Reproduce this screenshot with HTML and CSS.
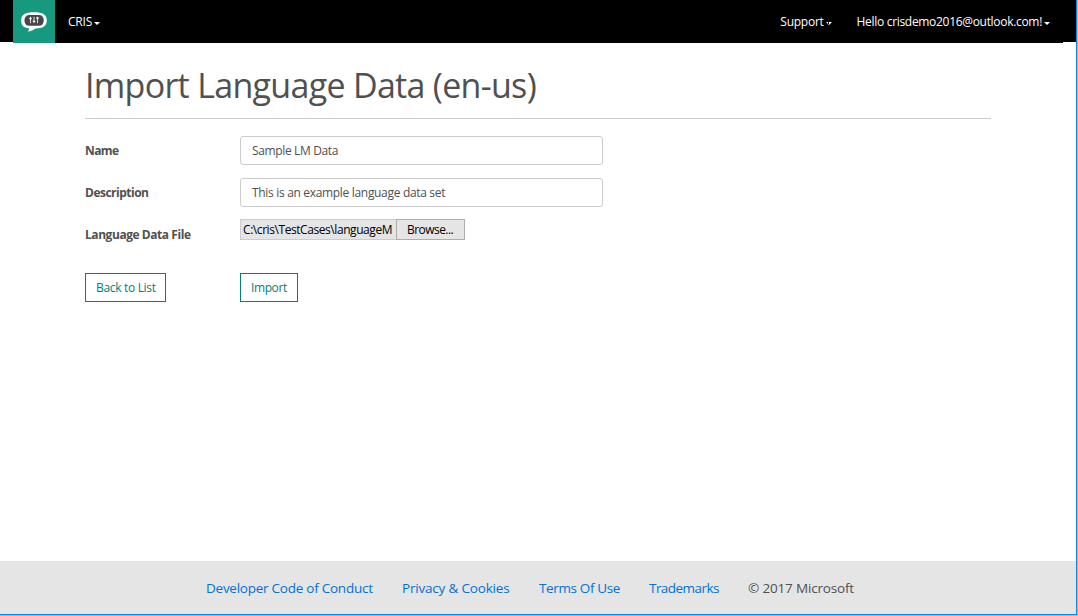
FILE: index.html
```html
<!DOCTYPE html>
<html lang="en">
<head>
<meta charset="utf-8">
<title>Import Language Data</title>
<link rel="stylesheet" href="styles.css">
</head>
<body>
<div class="window">
  <header class="topbar">
    <nav class="nav">
      <a class="logo" href="#">
        <svg width="42" height="43" viewBox="0 0 42 43">
          <path d="M21 12.3C29.500 12.300 33.800 14.500 33.800 20.300C33.800 26.500 30 28.300 22.500 28.400C20.500 30 18 31.200 14.500 31.600C15.700 30.500 16.200 29.500 16 28.200C10.500 27.800 8.200 25.800 8.200 20.300C8.200 14.500 12.500 12.300 21 12.300Z" fill="#fff"/>
          <rect x="11.500" y="15" width="19.200" height="10.800" rx="4.800" fill="#464646"/>
          <path d="M17.500 16.800v6.400M21 16.800v6.400M24.500 16.800v6.400" stroke="#ddd" stroke-width="1"/>
          <path d="M16.300 18.500h2.400M19.800 21.300h2.400M23.300 18h2.400" stroke="#fff" stroke-width="1.300"/>
        </svg>
      </a>
      <a class="nav-item" href="#"><span class="t-cris">CRIS</span><i class="caret"></i></a>
      <a class="nav-item support" href="#"><span class="t-support">Support</span><i class="caret split"></i></a>
      <a class="nav-item user" href="#"><span class="t-user">Hello crisdemo2016@outlook.com!</span><i class="caret"></i></a>
    </nav>
  </header>
  <main class="content">
    <h1 class="title"><span class="t-title">Import Language Data (en-us)</span></h1>
    <form class="form">
      <label class="label t-name">Name</label>
      <div class="field t-sample">Sample LM Data</div>
      <label class="label t-desc">Description</label>
      <div class="field t-example">This is an example language data set</div>
      <label class="label t-file">Language Data File</label>
      <div class="file">
        <div class="path"><span class="t-path">C:\cris\TestCases\languageM</span></div>
        <div class="browse"><span class="t-browse">Browse...</span></div>
      </div>
      <div class="cell"><a class="btn back" href="#"><span class="t-back">Back to List</span></a></div>
      <div class="cell"><a class="btn import" href="#"><span class="t-import">Import</span></a></div>
    </form>
  </main>
  <footer class="footer">
    <a class="link code" href="#"><span class="t-code">Developer Code of Conduct</span></a>
    <a class="link privacy" href="#"><span class="t-privacy">Privacy &amp; Cookies</span></a>
    <a class="link terms" href="#"><span class="t-terms">Terms Of Use</span></a>
    <a class="link marks" href="#"><span class="t-marks">Trademarks</span></a>
    <span class="t-copy">© 2017 Microsoft</span>
  </footer>
</div>
</body>
</html>
```
FILE: styles.css
```css
* { box-sizing: border-box; }
body {
  margin: 0;
  width: 1078px;
  height: 616px;
  overflow: hidden;
  background: #a9b9c6;
  font: 12px/20px "Open Sans", "Noto Sans", sans-serif;
  color: #505050;
}
a { text-decoration: none; }
span, .label, .field { white-space: nowrap; }
.window {
  display: flex;
  flex-direction: column;
  width: 1077px;
  height: 615px;
  background: #fff;
  border-right: 1px solid #1683d8;
  border-bottom: 1px solid #1683d8;
}
.topbar { height: 42px; flex: none; background: #000; padding: 0 13px; }
.nav { display: flex; height: 43px; background: #000; }
.logo { width: 42px; height: 43px; background: #16997f; margin-right: 13px; }
.logo svg { display: block; }
.nav-item { display: flex; align-items: center; color: #fff; height: 43px; }
.support { margin-left: auto; margin-right: 25px; }
.user { margin-right: 13px; }
.caret {
  margin: 4px 0 0 2px;
  border: 3px solid transparent;
  border-top-color: #fff;
  border-bottom: 0;
}
.split { position: relative; }
.split::after {
  content: "";
  position: absolute;
  left: -1px;
  top: -3px;
  width: 1px;
  height: 2px;
  background: #000;
}
.t-cris { letter-spacing: -0.2px; }
.t-support { letter-spacing: -0.25px; }
.t-user { letter-spacing: -0.31px; }
.content { flex: 1; padding: 23px 85px 0; }
.title {
  width: 906px;
  height: 54px;
  margin: 0 0 17px;
  border-bottom: 1px solid #ccc;
  font-size: 34px;
  line-height: 40px;
  font-weight: 400;
}
.t-title { letter-spacing: -0.7px; }
.form {
  display: grid;
  grid-template-columns: 155px 363px;
  grid-template-rows: 29px 29px 29px 29px;
  row-gap: 13px;
}
.label { font-weight: 700; line-height: 29px; }
.t-name { letter-spacing: -0.6px; }
.t-desc { letter-spacing: -0.5px; }
.t-file { letter-spacing: -0.44px; }
.field {
  height: 29px;
  line-height: 27px;
  padding-left: 11px;
  border: 1px solid #ccc;
  border-radius: 3px;
}
.t-sample { letter-spacing: -0.36px; }
.t-example { letter-spacing: -0.32px; }
.file { display: flex; height: 21px; margin-top: -1px; color: #000; line-height: 20px; }
.path {
  width: 156px;
  padding-left: 2px;
  background: #e5e5e5;
  border: 1px solid #ccc;
  border-right: 0;
}
.t-path { letter-spacing: -0.43px; }
.browse { width: 69px; padding-left: 10px; background: #e5e5e5; border: 1px solid #adadad; }
.t-browse { letter-spacing: -0.55px; }
.cell { padding-top: 11px; }
.btn {
  display: block;
  height: 29px;
  line-height: 27px;
  padding-left: 10px;
  border: 1px solid #008272;
  color: #008272;
}
.back { width: 81px; }
.import { width: 58px; }
.t-back { letter-spacing: -0.32px; }
.t-import { letter-spacing: -0.4px; }
.footer {
  display: flex;
  flex: none;
  height: 53px;
  padding-left: 206px;
  background: #e5e5e5;
  font-size: 13.500px;
  line-height: 54px;
}
.link { color: #0072d6; }
.code { width: 196px; }
.privacy { width: 137px; }
.terms { width: 110px; }
.marks { width: 99px; }
.t-code { letter-spacing: -0.25px; }
.t-privacy { letter-spacing: -0.19px; }
.t-terms { letter-spacing: -0.36px; }
.t-marks { letter-spacing: -0.55px; }
.t-copy { letter-spacing: -0.17px; }
```
